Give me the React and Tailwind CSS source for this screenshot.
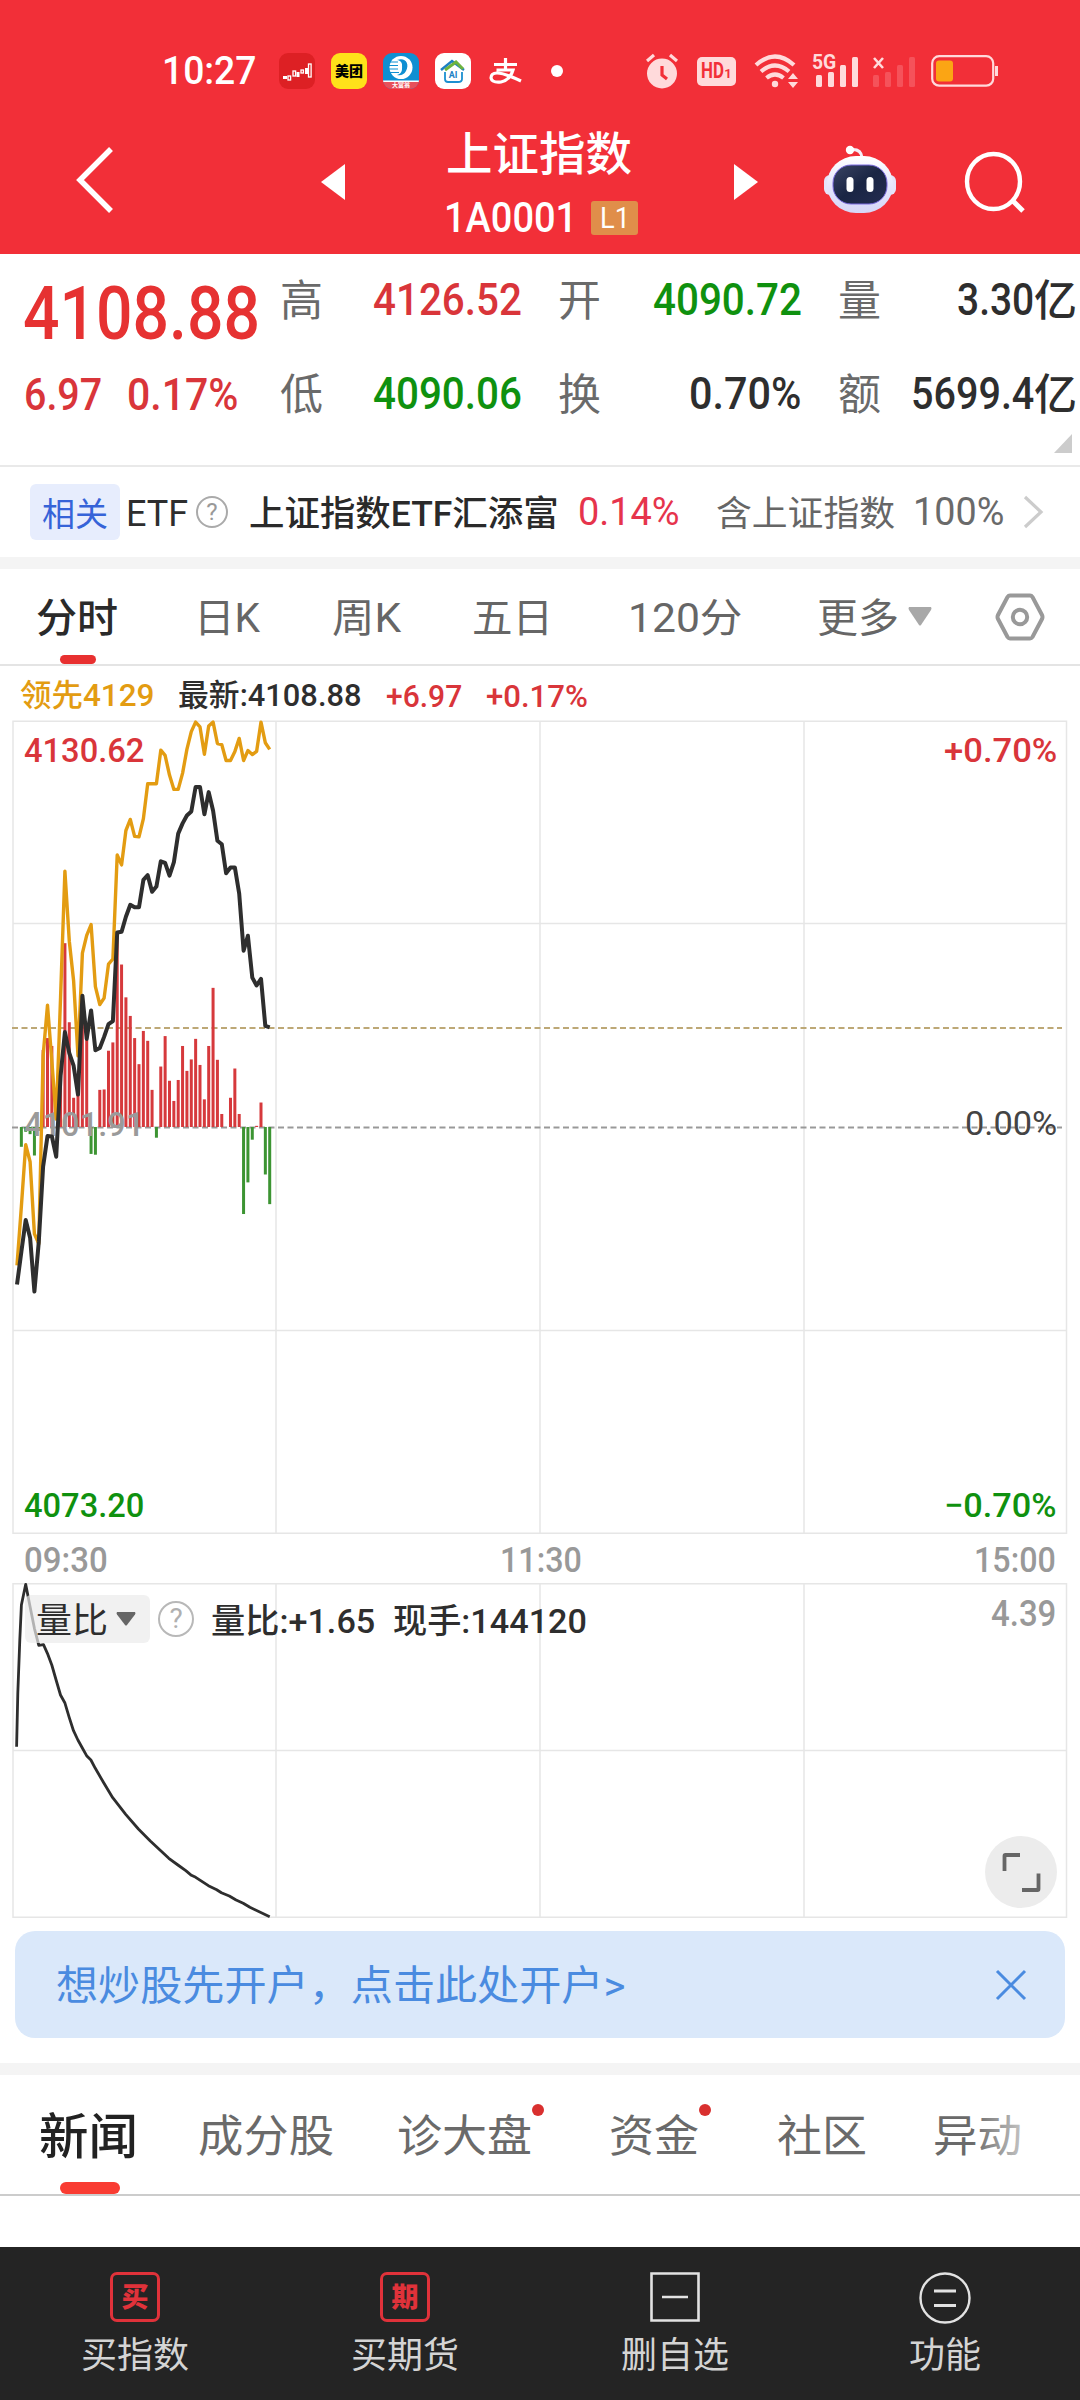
import { useLayoutEffect, useRef } from "react";

/* Text squeezed or stretched horizontally to the width of its box; Han text is nudged to its optical centre. */
function T({ className = "", children }) {
  const box = useRef(null);
  const text = useRef(null);
  useLayoutEffect(() => {
    const scale = box.current.clientWidth / text.current.offsetWidth;
    const nudge = /[\u4e00-\u9fff]/.test(text.current.textContent) ? 0.055 : 0;
    text.current.style.transform = `translateY(${nudge}em) scaleX(${scale})`;
  }, [children]);
  return (
    <span ref={box} className={"block shrink-0 whitespace-nowrap leading-none " + className}>
      <span ref={text} className="inline-block origin-left align-top">
        {children}
      </span>
    </span>
  );
}

const STEP = 4.357;
const px = (i) => 4 + STEP * i;
const py = (v) => v * 0.3954 - 21;

const price = [
  1478, 1395, 1315, 1360, 1496, 1370, 1180, 1103, 1104, 1155, 950, 840, 893, 925, 998, 748, 857, 785, 886, 880, 852,
  820, 812, 588, 586, 548, 518, 524, 524, 455, 443, 485, 472, 408, 412, 444, 410, 338, 312, 292, 282, 220, 220, 289,
  233, 280, 356, 365, 438, 424, 424, 490, 634, 596, 702, 722, 705, 824, 828,
];
const lead = [
  1430, 1280, 1125, 1168, 1350, 1375, 900, 772, 915, 1060, 750, 433, 610, 710, 900, 640, 595, 568, 725, 770, 754, 668,
  655, 392, 417, 330, 302, 345, 346, 300, 212, 212, 212, 127, 140, 190, 226, 226, 185, 125, 80, 56, 68, 137, 66, 56,
  110, 113, 153, 153, 130, 97, 153, 128, 138, 130, 56, 108, 125,
];
const bars = [
  1080, 1130, 1092, 1098, 1152, 1090, 885, 855, 875, 1080, 960, 615, 815, 1006, 998, 790, 860, 1148, 1150, 986, 985,
  887, 866, 600, 669, 752, 799, 855, 921, 837, 862, 986, 1107, 927, 850, 963, 1014, 961, 875, 938, 909, 857, 923, 1010,
  875, 728, 910, 1047, 1080, 1006, 932, 1047, 1300, 1220, 1112, 1077, 1018, 1200, 1275,
];
const ratio = [
  [42, 800], [45, 640], [50, 480], [54, 375], [65, 313], [76, 380], [87, 445], [98, 496], [110, 494], [120, 520],
  [131, 555], [142, 600], [153, 645], [164, 668], [175, 712], [186, 752], [197, 780], [208, 803], [219, 827], [230, 840],
  [241, 865], [263, 910], [285, 953], [318, 1003], [350, 1047], [380, 1083], [427, 1135], [450, 1155], [470, 1172],
  [484, 1186], [495, 1192], [527, 1217], [548, 1229], [560, 1238], [580, 1248], [597, 1260], [615, 1270], [632, 1282],
  [682, 1310],
];
const line = (arr) => arr.map((v, i) => `${px(i).toFixed(1)},${py(v).toFixed(1)}`).join(" ");

function Help({ className }) {
  return (
    <span
      className={"flex shrink-0 items-center justify-center rounded-full border-2 leading-none " + className}
    >
      ?
    </span>
  );
}

function StatusBar() {
  return (
    <div className="flex h-[48px] items-center text-white">
      <T className="ml-[162px] w-[94px] text-[38px] font-medium">10:27</T>
      <svg className="ml-[23px] shrink-0" width="36" height="36" viewBox="0 0 36 36">
        <rect width="36" height="36" rx="9" fill="#dd2024" />
        <g fill="none" stroke="#fff" strokeWidth="1.3">
          <rect x="9" y="23" width="2.6" height="4" />
          <rect x="14" y="18" width="2.6" height="5" />
          <rect x="22" y="17" width="2.4" height="3" />
          <rect x="29.5" y="11" width="2.6" height="13" />
        </g>
        <path d="M4 23h4v3H4zM17.500 19h3v5h-3zM26 15h3v6h-3z" fill="#fff" />
      </svg>
      <span className="ml-[16px] flex h-9 w-9 shrink-0 items-center justify-center rounded-[9px] bg-[#ffe11a] text-[14px] font-black leading-none text-black">
        美团
      </span>
      <span className="relative ml-[16px] h-9 w-9 shrink-0 overflow-hidden rounded-[9px] bg-[#0f8fd2]">
        <svg width="36" height="36" viewBox="0 0 36 36" className="block">
          <path d="M0 28h36v8H0z" fill="#e8505a" />
          <path d="M0 27.500h36v1.500H0z" fill="#fff" />
          <circle cx="18" cy="14.500" r="11.500" fill="#fff" />
          <path d="M14 7c8-3 13 3 9 11-2 4-6 5-9 4 6-2 5-6 5-11-1-3-3-4-5-4z" fill="#0f8fd2" />
          <path d="M6 9h9M5 12.500h10M5 16h10M6 19.500h10" stroke="#0f8fd2" strokeWidth="1" />
        </svg>
        <span className="absolute inset-x-0 top-[29px] text-center text-[6px] font-bold leading-none text-white">
          大富翁
        </span>
      </span>
      <span className="relative ml-[16px] h-9 w-9 shrink-0 rounded-[9px] bg-white">
        <svg width="36" height="36" viewBox="0 0 36 36" className="block" fill="none">
          <path d="M6 17L17 8l12 9" stroke="#1c7fc4" strokeWidth="2.500" />
          <path d="M10 17l11-8 7 7" stroke="#6db33f" strokeWidth="3" />
          <path d="M10 19v7q0 3 3 3h10q4 0 4-3v-7" stroke="#1c8fd0" strokeWidth="1.800" />
        </svg>
        <span className="absolute inset-x-0 top-[18px] text-center text-[9px] font-bold leading-none text-[#1c7fc4]">
          AI
        </span>
      </span>
      {/* payment-app mark: cross stroke, arm and looping tail */}
      <svg className="ml-[18px] shrink-0" width="34" height="26" viewBox="0 0 34 26" fill="none" stroke="#fff" strokeWidth="3.200">
        <path d="M5 6.500h23M16.500 0v12M7.500 12H24q-3 10-12 12-9 1-10-4 0-5 6-5 7 0 24 8" />
      </svg>
      <span className="ml-[28px] h-3 w-3 shrink-0 rounded-full bg-white" />
      <svg className="ml-[83px] shrink-0" width="32" height="36" viewBox="0 0 32 36" fill="#ffdadb">
        <circle cx="16" cy="20.500" r="15" />
        <path d="M1 8l7-6M31 8l-7-6" stroke="#ffdadb" strokeWidth="3.200" />
        <path d="M16 13v9l5 4" stroke="#f22f38" strokeWidth="3.200" fill="none" />
      </svg>
      <span className="ml-[19px] flex h-[29px] w-[39px] shrink-0 items-center justify-center rounded-[5px] bg-[#ffdadb] font-bold text-[#f22f38]">
        <T className="w-[23px] text-[22px]">HD</T>
        <span className="pt-1 text-[13px] leading-none">1</span>
      </span>
      <svg className="ml-[18px] shrink-0" width="46" height="36" viewBox="0 0 46 36" fill="none" stroke="#ffdadb">
        <path d="M2 12q19-17 38 0M7 18.500q14-12 28 0M12.500 25q8.500-7 17 0" strokeWidth="4.200" />
        <circle cx="21" cy="31" r="3.200" fill="#ffdadb" stroke="none" />
        <path d="M34 26l5-6 5 6zM34 29l5 6 5-6z" fill="#ffdadb" stroke="none" />
      </svg>
      <span className="relative ml-[12px] h-9 w-[48px] shrink-0">
        <svg width="48" height="36" viewBox="0 0 48 36" fill="#ffdadb">
          <rect x="4" y="22" width="6" height="12" rx="1.500" />
          <rect x="16" y="19" width="6" height="15" rx="1.500" />
          <rect x="28" y="12" width="6" height="22" rx="1.500" />
          <rect x="40" y="4" width="6" height="30" rx="1.500" />
        </svg>
        <span className="absolute -top-px left-0">
          <T className="w-[24px] text-[21px] font-bold text-[#ffdadb]">5G</T>
        </span>
      </span>
      <svg className="ml-[12px] shrink-0" width="46" height="36" viewBox="0 0 46 36" fill="#f5525a">
        <rect x="1" y="22" width="6" height="12" rx="1.500" />
        <rect x="13" y="19" width="6" height="15" rx="1.500" />
        <rect x="25" y="12" width="6" height="22" rx="1.500" />
        <rect x="37" y="4" width="6" height="30" rx="1.500" />
        <path d="M2 5l9 10M11 5l-9 10" stroke="#ffdadb" strokeWidth="2.600" />
      </svg>
      <svg className="ml-[13px] shrink-0" width="68" height="32" viewBox="0 0 68 32">
        <rect x="1.200" y="1.200" width="61" height="29.500" rx="7" fill="none" stroke="#ffdadb" strokeWidth="2.200" />
        <rect x="5" y="5.500" width="17" height="21" rx="3" fill="#fba514" />
        <path d="M65.500 11v10" stroke="#ffdadb" strokeWidth="3" />
      </svg>
    </div>
  );
}

function Robot() {
  return (
    <svg width="72" height="68" viewBox="0 0 72 68" className="mt-[50px] ml-[66px] shrink-0">
      <defs>
        <linearGradient id="shell" x1="0" y1="0" x2="0" y2="1">
          <stop offset="0" stopColor="#ffffff" />
          <stop offset="0.600" stopColor="#e3e3fb" />
          <stop offset="1" stopColor="#d6d6f7" />
        </linearGradient>
        <linearGradient id="face" x1="0" y1="0" x2="1" y2="1">
          <stop offset="0" stopColor="#3a4463" />
          <stop offset="0.500" stopColor="#1a2544" />
          <stop offset="1" stopColor="#242c50" />
        </linearGradient>
      </defs>
      <path d="M27 4.500q10-1 11 8" fill="none" stroke="#f6eef8" strokeWidth="3" />
      <circle cx="26" cy="5" r="4.200" fill="#fff" />
      <rect x="0" y="30" width="72" height="20" rx="6" fill="#e6e4fa" />
      <rect x="3" y="11" width="66" height="57" rx="29" fill="url(#shell)" />
      <rect x="9" y="20" width="54" height="39" rx="18" fill="url(#face)" stroke="#7b6be0" strokeWidth="1" />
      <rect x="22.500" y="32" width="7" height="15" rx="3.500" fill="#fff" />
      <rect x="42.500" y="32" width="7" height="15" rx="3.500" fill="#fff" />
    </svg>
  );
}

function NavBar() {
  return (
    <div className="flex h-[159px] items-start text-white">
      <svg className="mt-[52px] ml-[75px] shrink-0" width="40" height="66" viewBox="0 0 40 66">
        <path d="M36 2L5 33l31 31" fill="none" stroke="#fff" strokeWidth="5.500" />
      </svg>
      <svg className="mt-[69px] ml-[206px] shrink-0" width="24" height="36" viewBox="0 0 24 36" fill="#fff">
        <path d="M24 0v36L0 18z" />
      </svg>
      <div className="ml-[99px] shrink-0">
        <T className="mt-[33px] ml-[2px] w-[186px] text-[46px] font-medium">上证指数</T>
        <div className="mt-[23px] flex items-center">
          <T className="w-[133px] text-[42px] font-medium">1A0001</T>
          <span className="ml-[14px] flex h-[34px] w-[47px] items-center justify-center rounded-[3px] bg-[#e08e4a]">
            <T className="w-[30px] text-[29px]">L1</T>
          </span>
        </div>
      </div>
      <svg className="mt-[69px] ml-[96px] shrink-0" width="24" height="36" viewBox="0 0 24 36" fill="#fff">
        <path d="M0 0v36l24-18z" />
      </svg>
      <Robot />
      <svg className="mt-[56px] ml-[68px] shrink-0" width="62" height="62" viewBox="0 0 62 62" fill="none" stroke="#fff">
        <ellipse cx="29.500" cy="30.500" rx="26.500" ry="27.500" strokeWidth="4.400" />
        <path d="M49 50l10 10" strokeWidth="5" />
      </svg>
    </div>
  );
}

function Quote() {
  const label = "w-[43px] text-[43px] text-[#6a6a6a] ";
  const num = "text-[45px] font-medium ";
  return (
    <section className="relative h-[213px] border-b-2 border-[#e9e9e9]">
      <div className="flex h-[91px] items-center">
        <T className="mt-[28px] ml-[23px] w-[237px] text-[74px] font-medium text-[#e63232]">4108.88</T>
        <T className={label + "ml-[20px]"}>高</T>
        <T className={num + "ml-[50px] w-[149px] text-[#d9353a]"}>4126.52</T>
        <T className={label + "ml-[36px]"}>开</T>
        <T className={num + "ml-[52px] w-[149px] text-[#0f910f]"}>4090.72</T>
        <T className={label + "ml-[36px]"}>量</T>
        <T className={num + "ml-[76px] w-[77px] text-[#2e2e2e]"}>3.30</T>
        <T className="w-[43px] text-[43px] font-medium text-[#2e2e2e]">亿</T>
      </div>
      <div className="flex h-[96px] items-center">
        <T className={num + "mt-[3px] ml-[24px] w-[78px] text-[#d9353a]"}>6.97</T>
        <T className={num + "mt-[3px] ml-[25px] w-[111px] text-[#d9353a]"}>0.17%</T>
        <T className={label + "ml-[42px]"}>低</T>
        <T className={num + "ml-[50px] w-[149px] text-[#0f910f]"}>4090.06</T>
        <T className={label + "ml-[36px]"}>换</T>
        <T className={num + "ml-[88px] w-[112px] text-[#2e2e2e]"}>0.70%</T>
        <T className={label + "ml-[37px]"}>额</T>
        <T className={num + "ml-[30px] w-[123px] text-[#2e2e2e]"}>5699.4</T>
        <T className="w-[43px] text-[43px] font-medium text-[#2e2e2e]">亿</T>
      </div>
      <svg className="absolute right-2 bottom-[12px]" width="18" height="19" viewBox="0 0 18 19">
        <path d="M18 0v19H0z" fill="#ccc" />
      </svg>
    </section>
  );
}

function Related() {
  return (
    <section className="flex h-[90px] items-center">
      <span className="ml-[30px] flex h-[56px] w-[90px] shrink-0 items-center justify-center rounded-[6px] bg-[#e7edfd] text-[#3663d8]">
        <T className="w-[66px] text-[33px]">相关</T>
      </span>
      <T className="mt-[3px] ml-[6px] w-[62px] text-[36px] text-[#2e2e2e]">ETF</T>
      <Help className="ml-[8px] h-[32px] w-[32px] border-[#aaa] text-[24px] text-[#999]" />
      <T className="ml-[21px] w-[310px] text-[35px] font-medium text-[#2a2a2a]">上证指数ETF汇添富</T>
      <T className="ml-[19px] w-[102px] text-[39px] text-[#e6344c]">0.14%</T>
      <T className="ml-[36px] w-[179px] text-[35px] text-[#666]">含上证指数</T>
      <T className="ml-[18px] w-[91px] text-[39px] text-[#6a6a6a]">100%</T>
      <svg className="ml-[19px] shrink-0" width="22" height="34" viewBox="0 0 22 34">
        <path d="M2 2l16 15L2 32" fill="none" stroke="#ccc" strokeWidth="3.200" />
      </svg>
    </section>
  );
}

function PeriodTabs() {
  const t = "text-[40px] text-[#666] ";
  return (
    <nav className="relative flex h-[97px] items-center border-b-2 border-[#e4e4e4]">
      <T className="ml-[36px] w-[82px] text-[40px] font-medium text-[#2a2a2a]">分时</T>
      <T className={t + "ml-[76px] w-[66px]"}>日K</T>
      <T className={t + "ml-[72px] w-[69px]"}>周K</T>
      <T className={t + "ml-[71px] w-[81px]"}>五日</T>
      <T className={t + "ml-[75px] w-[114px]"}>120分</T>
      <T className={t + "ml-[75px] w-[82px]"}>更多</T>
      <svg className="ml-[9px] shrink-0" width="24" height="19" viewBox="0 0 24 19">
        <path d="M1 0h22q1 1 0 3L13 18q-1 1-2 0L1 3q-1-2 0-3z" fill="#a8a8a8" />
      </svg>
      <svg className="ml-[63px] shrink-0" width="50" height="48" viewBox="0 0 50 48" fill="none" stroke="#999" strokeWidth="4">
        <path d="M15 2.500h20q1.500 0 2.500 1.500L47 22q1 2 0 4L37.500 44q-1 1.500-2.500 1.500H15q-1.500 0-2.500-1.500L3 26q-1-2 0-4L12.500 4q1-1.500 2.500-1.500z" />
        <circle cx="25" cy="24" r="7.200" />
      </svg>
      <span className="absolute bottom-0 left-[60px] h-[9px] w-[36px] rounded-full bg-[#e83030]" />
    </nav>
  );
}

function Legend() {
  return (
    <div className="flex h-[55px] items-center text-[31px] font-medium">
      <T className="ml-[20px] w-[134px] text-[#e39c12]">领先4129</T>
      <T className="ml-[24px] w-[184px] text-[#2e2e2e]">最新:4108.88</T>
      <T className="mt-[4px] ml-[24px] w-[76px] text-[32px] text-[#d9353a]">+6.97</T>
      <T className="mt-[4px] ml-[24px] w-[102px] text-[32px] text-[#d9353a]">+0.17%</T>
    </div>
  );
}

function MinuteChart() {
  return (
    <div className="relative mx-[13px] h-[813px]">
      <svg width="1054" height="813" viewBox="0 0 1054 813" fill="none" className="block overflow-visible">
        <g stroke="#e6e6e6" strokeWidth="1.500">
          <path d="M0 0.250h1053.500v812h-1053.500zM263 0v813M527 0v813M791 0v813M0 202.500h1054M0 609.500h1054" />
        </g>
        <path d="M-1 307h1050" stroke="#bda876" strokeWidth="2" strokeDasharray="6 3.500" />
        <path d="M-1 406.500h1050" stroke="#999" strokeWidth="2" strokeDasharray="6 3.500" />
        {bars.map((v, i) => {
          const y = py(v);
          return (
            <rect
              key={i}
              x={px(i) - 1.5}
              y={Math.min(y, 406)}
              width="3"
              height={Math.abs(y - 406)}
              fill={v > 1080 ? "#3c9432" : "#d6393c"}
            />
          );
        })}
      </svg>
      <span className="absolute top-[386px] left-[11px] text-[34px] font-medium text-[#9a9a9a]">
        <T className="w-[120px]">4101.91</T>
      </span>
      <svg
        width="1054"
        height="813"
        viewBox="0 0 1054 813"
        fill="none"
        strokeLinejoin="round"
        className="absolute inset-0 overflow-visible"
      >
        <polyline points={line(lead)} stroke="#e39c12" strokeWidth="3.400" />
        <polyline points={line(price)} stroke="#2e2e2e" strokeWidth="4" />
      </svg>
      <span className="absolute top-[12px] left-[11px] text-[34px] font-medium text-[#d9353a]">
        <T className="w-[120px]">4130.62</T>
      </span>
      <span className="absolute top-[12px] right-[10px] text-[34px] font-medium text-[#d9353a]">
        <T className="w-[113px]">+0.70%</T>
      </span>
      <span className="absolute top-[385px] right-[10px] text-[34px] text-[#444]">
        <T className="w-[92px]">0.00%</T>
      </span>
      <span className="absolute bottom-[12px] left-[11px] text-[34px] font-medium text-[#0f910f]">
        <T className="w-[120px]">4073.20</T>
      </span>
      <span className="absolute right-[10px] bottom-[12px] text-[34px] font-medium text-[#0f910f]">
        <T className="w-[113px]">−0.70%</T>
      </span>
    </div>
  );
}

function RatioChart() {
  return (
    <div className="relative mx-[13px] h-[335px]">
      <svg width="1054" height="335" viewBox="0 0 1054 335" fill="none" className="block overflow-visible">
        <path
          d="M0 0.750h1053.500v333.500h-1053.500zM263 0v335M527 0v335M791 0v335M0 167.500h1054"
          stroke="#e6e6e6"
          strokeWidth="1.500"
        />
        <polyline
          points={ratio.map(([x, y]) => `${(x / 2.529 - 13).toFixed(1)},${(y / 3 - 103).toFixed(1)}`).join(" ")}
          stroke="#2e2e2e"
          strokeWidth="2.800"
          strokeLinejoin="round"
        />
      </svg>
      <div className="absolute top-[12px] left-[12px] flex h-[48px] items-center font-medium text-[#2e2e2e]">
        <div className="flex h-full w-[125px] items-center rounded-[6px] bg-[#ebebeb]/70 pl-[11px]">
          <T className="w-[72px] text-[35px] font-normal">量比</T>
          <svg className="ml-[8px]" width="20" height="14" viewBox="0 0 20 14">
            <path d="M1 0h18q1 1 0 2.500l-8 10.500q-1 1-2 0L1 2.500Q0 1 1 0z" fill="#666" />
          </svg>
        </div>
        <Help className="ml-[8px] h-[36px] w-[36px] border-[#b8b8b8] text-[28px] font-normal text-[#b0b0b0]" />
        <T className="ml-[17px] w-[164px] text-[34px]">量比:+1.65</T>
        <T className="ml-[18px] w-[194px] text-[34px]">现手:144120</T>
      </div>
      <span className="absolute top-[13px] right-[11px] text-[36px] font-medium text-[#999]">
        <T className="w-[65px]">4.39</T>
      </span>
      <span className="absolute right-[10px] bottom-[10px] h-[72px] w-[72px] rounded-full bg-[#ececec]">
        <svg width="72" height="72" viewBox="0 0 72 72" fill="none" stroke="#666" strokeWidth="3.800">
          <path d="M19.500 35V20q0-1 1-1H35M37 54h15.500q1 0 1-1V37.500" />
        </svg>
      </span>
    </div>
  );
}

function NewsTabs() {
  const t = "text-[44px] text-[#6a6a6a] ";
  return (
    <nav className="relative flex h-[121px] items-center border-b-2 border-[#cccccc]">
      <T className="ml-[39px] w-[99px] text-[49px] font-medium text-[#222]">新闻</T>
      <T className={t + "ml-[60px] w-[136px]"}>成分股</T>
      <T className={t + "ml-[63px] w-[135px]"}>诊大盘</T>
      <span className="mb-[50px] h-[12px] w-[12px] shrink-0 rounded-full bg-[#d9302f]" />
      <T className={t + "ml-[65px] w-[90px]"}>资金</T>
      <span className="mb-[50px] h-[12px] w-[12px] shrink-0 rounded-full bg-[#d9302f]" />
      <T className={t + "ml-[66px] w-[90px]"}>社区</T>
      <span className="relative ml-[66px]">
        <T className={t + "w-[89px]"}>异动</T>
        <span className="absolute -inset-y-2 right-0 w-[50px] bg-gradient-to-r from-white/0 to-white/60" />
      </span>
      <span className="absolute bottom-0 left-[60px] h-[12px] w-[60px] rounded-full bg-[#f93c32]" />
    </nav>
  );
}

function BottomBar() {
  const item = "flex flex-1 flex-col items-center pt-[25px] text-[#d4d4d4]";
  const box = "flex h-[50px] w-[50px] items-center justify-center rounded-[7px] border-[3px] border-[#e0323a] pt-[2px] text-[27px] font-black leading-none text-[#e0323a]";
  const label = "mt-[14px] text-[36px] ";
  return (
    <footer className="flex h-[153px] bg-[#242424]">
      <div className={item}>
        <span className={box}>买</span>
        <T className={label + "w-[108px]"}>买指数</T>
      </div>
      <div className={item}>
        <span className={box}>期</span>
        <T className={label + "w-[108px]"}>买期货</T>
      </div>
      <div className={item}>
        <svg width="50" height="50" viewBox="0 0 50 50" fill="none" stroke="#e2e2e2" strokeWidth="2.600">
          <path d="M1.500 1.500h47v47h-47zM12 25h26" />
        </svg>
        <T className={label + "w-[108px]"}>删自选</T>
      </div>
      <div className={item}>
        <svg width="52" height="52" viewBox="0 0 52 52" fill="none" stroke="#e2e2e2" strokeWidth="2.400" className="-mb-[2px]">
          <circle cx="26" cy="26" r="24.500" />
          <path d="M15 19h22M15 33.500h22" strokeWidth="3" />
        </svg>
        <T className={label + "w-[72px]"}>功能</T>
      </div>
    </footer>
  );
}

export default function App() {
  return (
    <div className="flex h-[2400px] w-[1080px] flex-col overflow-hidden bg-white font-[Roboto,'Noto_Sans_CJK_SC',sans-serif]">
      <header className="h-[254px] shrink-0 bg-[#f22f38] pt-[47px]">
        <StatusBar />
        <NavBar />
      </header>
      <Quote />
      <Related />
      <div className="h-[12px] shrink-0 bg-[#f4f4f4]" />
      <PeriodTabs />
      <Legend />
      <MinuteChart />
      <div className="flex h-[49px] items-center pt-[3px] text-[35px] font-medium text-[#999]">
        <T className="ml-[24px] w-[84px]">09:30</T>
        <T className="ml-[392px] w-[82px]">11:30</T>
        <T className="ml-[392px] w-[82px]">15:00</T>
      </div>
      <RatioChart />
      <div className="mx-[15px] mt-[13px] flex h-[107px] shrink-0 items-center rounded-[20px] bg-[#dae8fa] text-[#4a8be0]">
        <T className="ml-[41px] w-[569px] text-[41px]">想炒股先开户，点击此处开户&gt;</T>
        <svg className="ml-[370px] shrink-0" width="32" height="32" viewBox="0 0 32 32">
          <path d="M2 2l28 28M30 2L2 30" stroke="#4a8be0" strokeWidth="3" />
        </svg>
      </div>
      <div className="mt-[25px] h-[12px] shrink-0 bg-[#f4f4f4]" />
      <NewsTabs />
      <div className="grow" />
      <BottomBar />
    </div>
  );
}
